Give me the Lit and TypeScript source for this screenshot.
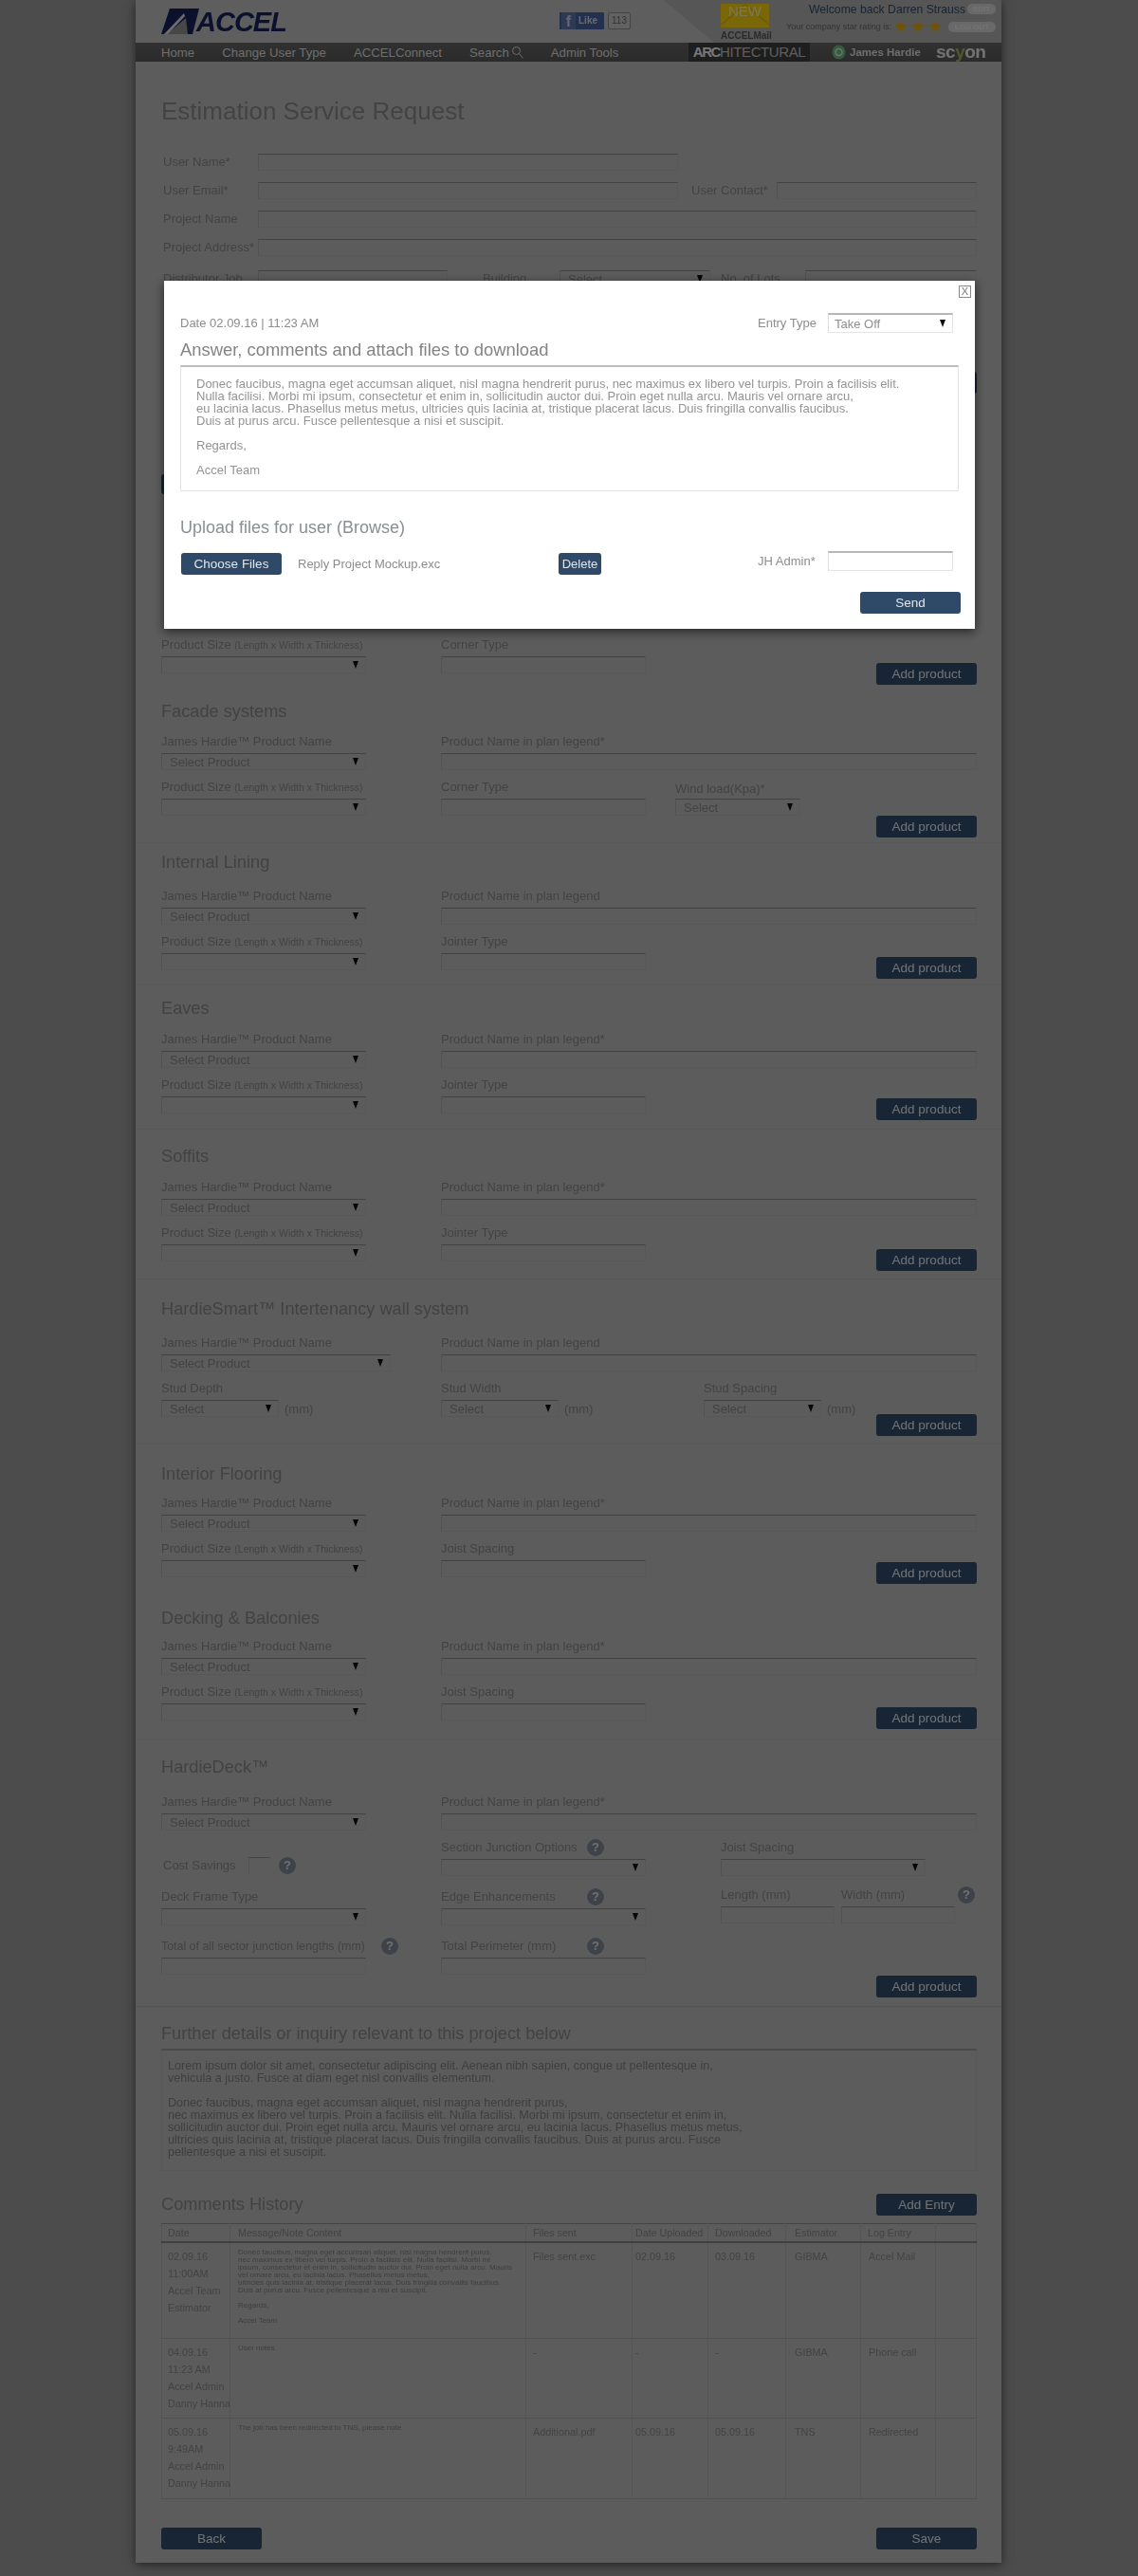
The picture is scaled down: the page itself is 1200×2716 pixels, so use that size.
import { LitElement, html, css, nothing } from "lit";
import { customElement } from "lit/decorators.js";

const LEGEND = "Product Name in plan legend";
interface Sec { title: string; legend: string; type: string; pt: number; hg: number; add: number; pb: number; wind?: boolean; line?: boolean; }
const SECTIONS: Sec[] = [
  { title: "Facade systems", legend: LEGEND + "*", type: "Corner Type", pt: 16, hg: 11, add: 39, pb: 5, wind: true },
  { title: "Internal Lining", legend: LEGEND, type: "Jointer Type", pt: 8, hg: 15, add: 25, pb: 5, line: true },
  { title: "Eaves", legend: LEGEND + "*", type: "Jointer Type", pt: 13, hg: 12, add: 23, pb: 9, line: true },
  { title: "Soffits", legend: LEGEND + "*", type: "Jointer Type", pt: 16, hg: 12, add: 26, pb: 8, line: true },
  { title: "@SMART", legend: LEGEND, type: "", pt: 19, hg: 15, add: 0, pb: 8, line: true },
  { title: "Interior Flooring", legend: LEGEND + "*", type: "Joist Spacing", pt: 19, hg: 10, add: 23, pb: 24, line: true },
  { title: "Decking & Balconies", legend: LEGEND + "*", type: "Joist Spacing", pt: 0, hg: 9, add: 25, pb: 11, line: false },
];

const HISTORY = [
  {
    who: ["02.09.16", "11:00AM", "Accel Team", "Estimator"],
    msg: html`<p class="m">Donec faucibus, magna eget accumsan aliquet, nisl magna hendrerit purus,<br />nec maximus ex libero vel turpis. Proin a facilisis elit. Nulla facilisi. Morbi mi<br />ipsum, consectetur et enim in, sollicitudin auctor dui. Proin eget nulla arcu. Mauris<br />vel ornare arcu, eu lacinia lacus. Phasellus metus metus,<br />ultricies quis lacinia at, tristique placerat lacus. Duis fringilla convallis faucibus.<br />Duis at purus arcu. Fusce pellentesque a nisi et suscipit.</p><p class="m gap">Regards,</p><p class="m gap">Accel Team</p>`,
    file: "Files sent.exc", up: "02.09.16", down: "03.09.16", est: "GIBMA", log: "Accel Mail",
  },
  {
    who: ["04.09.16", "11:23 AM", "Accel Admin", "Danny Hanna"],
    msg: html`<p class="m">User notes</p>`,
    file: "-", up: "-", down: "-", est: "GIBMA", log: "Phone call",
  },
  {
    who: ["05.09.16", "9:49AM", "Accel Admin", "Danny Hanna"],
    msg: html`<p class="m">The job has been redirected to TNS, please note</p>`,
    file: "Additional.pdf", up: "05.09.16", down: "05.09.16", est: "TNS", log: "Redirected",
  },
];

const star = html`<svg class="star" viewBox="0 0 20 20"><path d="M10 1l2.7 6 6.3.6-4.8 4.2 1.5 6.4L10 14.8l-5.7 3.4 1.5-6.4L1 7.600l6.300-.6z" /></svg>`;

@customElement("app-root")
export class AppRoot extends LitElement {
  static styles = css`
    :host { display: block; position: relative; height: 2716px; overflow: hidden; background: #989898;
      font-family: "Liberation Sans", Arial, sans-serif; color: #868686; }
    * { box-sizing: border-box; }
    p { margin: 0; }
    .card { width: 913px; height: 2702px; margin-left: 143px; background: #b8b8b8; box-shadow: 0 2px 10px rgba(0,0,0,.55); filter: blur(.45px); }
    .hdr { position: relative; height: 45px; display: flex; padding-left: 27px; overflow: hidden; background: #bcbcbc; }
    .hdr::before { content: ""; position: absolute; inset: 0; background: #acacac; clip-path: polygon(557px 0, 100% 0, 100% 100%, 610px 100%); }
    .hdr > * { position: relative; }
    .logo { display: flex; align-items: flex-start; width: 420px; padding-top: 8px; }
    .logo svg { width: 40px; height: 29px; flex: none; }
    .logo b { font: italic 700 29px/30px "Liberation Sans", sans-serif; color: #16235a; margin-left: -3px; letter-spacing: -1px; }
    .fb { display: flex; width: 170px; padding-top: 13px; }
    .like { width: 47px; height: 18px; background: #47609c; color: #cfd6e6; font: 700 10px/18px "Liberation Sans", sans-serif; display: flex; border-radius: 1px; }
    .like i { font: 700 16px/20px "Liberation Sans", sans-serif; color: #c7cfe2; width: 15px; margin: 0 3px 0 2px; text-align: center; background: #5c73a9; height: 18px; overflow: hidden; }
    .count { margin-left: 4px; width: 24px; height: 18px; border: 1px solid #888; border-radius: 2px; font-size: 10px; line-height: 16px; text-align: center; color: #666; background: #c4c4c4; }
    .mail { width: 51px; padding-top: 4px; text-align: center; }
    .env { position: relative; display: block; height: 25px; background: #f5cf10; color: #f8ecb0; font: 15px/16px "Liberation Sans", sans-serif; overflow: hidden; }
    .env::after { content: ""; position: absolute; left: 0; right: 0; top: 0; height: 22px; background: linear-gradient(to bottom right, transparent 49%, #d8b408 50%, #d8b408 53%, transparent 54%) left/50% 100% no-repeat, linear-gradient(to bottom left, transparent 49%, #d8b408 50%, #d8b408 53%, transparent 54%) right/50% 100% no-repeat; }
    .env span { position: relative; z-index: 1; display: block; }
    .mail b { display: block; font: 700 10px/14px "Liberation Sans", sans-serif; color: #555; margin-top: 2px; white-space: nowrap; }
    .user { margin-left: 18px; width: 221px; }
    .u1 { display: flex; height: 19px; padding-top: 3px; }
    .welcome { margin-left: 24px; width: 165px; font: 12.2px/15px "Liberation Sans", sans-serif; color: #2f4a68; white-space: nowrap; }
    .pill { background: #d2d2d2; border-radius: 5px; color: #e6e6e6; font: 700 8px/11px "Liberation Sans", sans-serif; text-align: center; }
    .u1 .pill { width: 31px; height: 11px; margin-left: 2px; margin-top: 1px; }
    .u2 { display: flex; align-items: center; height: 18px; margin-top: 0; }
    .rate { font-size: 9px; color: #666; width: 114px; white-space: nowrap; }
    .star { width: 14px; height: 14px; fill: #e2a60c; margin-right: 4px; flex: none; }
    .u2 .pill { width: 50px; height: 11px; margin-left: 3px; }
    .nav { height: 20px; display: flex; align-items: center; padding-left: 27px; gap: 29px; background: linear-gradient(#626262, #565656); position: relative; color: #dcdcdc; font-size: 13.2px; white-space: nowrap; }
    .search { display: flex; align-items: center; gap: 2px; }
    .search svg { width: 13px; height: 14px; }
    .brands { margin-left: auto; display: flex; align-items: center; height: 20px; }
    .arch { width: 128px; height: 20px; background: #3c3c3c; font-size: 15px; line-height: 20px; text-align: center; color: #bdbdbd; letter-spacing: -.4px; font-weight: 400; }
    .arch b { color: #eee; letter-spacing: -1.4px; }
    .jh { display: flex; align-items: center; margin-left: 23px; font: 700 11.5px/20px "Liberation Sans", sans-serif; color: #ddd; width: 110px; }
    .jh svg { width: 15px; height: 16px; margin-right: 4px; }
    .scyon { font: 700 19px/20px "Liberation Sans", sans-serif; color: #e4e4e4; width: 69px; letter-spacing: -.5px; }
    .scyon i { color: #a3b355; font-style: normal; }

    .body { padding: 0 26px 0 27px; }
    h1 { margin: 38px 0 31px; font: 400 26px/28px "Liberation Sans", sans-serif; color: #878787; height: 28px; }
    h2 { margin: 0; font: 400 18.2px/24px "Liberation Sans", sans-serif; color: #858585; height: 24px; }
    .lbl { font-size: 13px; line-height: 18px; white-space: nowrap; display: block; }
    .lbl small { font-size: 10.5px; }
    .frow { display: flex; align-items: center; height: 18px; margin-bottom: 12px; }
    .frow .lbl { width: 102px; padding-left: 2px; flex: none; }
    .fld { display: flex; align-items: center; justify-content: space-between; height: 18px; padding: 0 7px 0 8px; border-style: solid; border-width: 1px; border-color: #848484 #b0b0b0 #b0b0b0 #a4a4a4; font-size: 13px; white-space: nowrap; flex: none; }
    .arrow { width: 0; height: 0; border-style: solid; border-width: 8px 3.500px 0; border-color: #0d0d0d transparent transparent; margin-left: auto; }
    .w216 { width: 216px; } .w242 { width: 242px; } .w132 { width: 132px; } .w124 { width: 124px; } .w121 { width: 121px; }
    .w200 { width: 200px; } .w211 { width: 211px; } .w159 { width: 159px; } .w443 { width: 443px; }
    .grow { flex: 1; }
    .row { display: flex; }
    .row + .row { margin-top: 9px; }
    .col { flex: none; }
    .col.grow { flex: 1; }
    .col .lbl { margin-bottom: 3px; }
    .c1 { width: 295px; }
    .btn { display: block; width: 106px; height: 23px; border-radius: 3px; background: #2f4a68; color: #e0e6ec; font-size: 13.5px; line-height: 23px; text-align: center; border: 0; padding: 0; font-family: inherit; }
    .add { margin-left: auto; margin-top: var(--add); flex: none; }
    .add28 { --add: 28px; } .add36 { --add: 36px; } .add40 { --add: 40px; }
    section.line { border-top: 1px solid #b0b0b0; }
    .hs { padding: var(--pt) 26px var(--pb) 27px; margin: 0 -26px 0 -27px; }
    .hs h2 { margin-bottom: var(--hg); }
    .wind { width: 132px; margin-left: 31px; margin-top: 2px; }
    .wind .lbl { margin-bottom: 1px; }
    .unit { display: flex; align-items: center; }
    .unit span { font-size: 13px; margin-left: 6px; }
    .sc2 { width: 277px; }
    .q { display: inline-block; width: 18px; height: 18px; border-radius: 50%; background: #7d8592; color: #e0e0e0; font: 700 13px/18px "Liberation Sans", sans-serif; text-align: center; flex: none; }
    .qlbl { display: flex; justify-content: space-between; height: 18px; margin-bottom: 3px; }
    .qlbl .lbl { margin: 0; }
    .q172 { width: 172px; } .q250 { width: 250px; }
    .qlbl .tight { font-size: 12.4px; }
    .l127 { width: 127px; }
    .d2 { width: 295px; flex: none; }
    .cost { display: flex; align-items: center; padding: 19px 0 0 2px; height: 37px; }
    .cost .lbl { width: 90px; margin: 0; }
    .cost .fld { width: 23px; padding: 0; margin-right: 9px; border-color: #848484 #b8b8b8 #b8b8b8 #a4a4a4; }
    .lw { display: flex; gap: 7px; }
    .lw .fld { width: 120px; }
    .lw3 { width: 268px; flex: none; margin-top: -2px; }
    .row.dr { margin-top: 13px; }
    .further { border-top: 1px solid #a6a6a6; padding: 16px 26px 0 27px; margin: 0 -26px 0 -27px; }
    .ta { margin-top: 4px; height: 129px; border: 1px solid #b0b0b0; border-top: 2px solid #949494; padding: 10px 6px; font-size: 12.6px; line-height: 13px; color: #7e7e7e; white-space: nowrap; }
    .ta p + p { margin-top: 13px; }
    .chead { display: flex; justify-content: space-between; align-items: center; margin-top: 23px; }
    table { width: 859px; margin-top: 8px; border-collapse: collapse; table-layout: fixed; }
    .c72 { width: 72px; } .c312 { width: 312px; } .c112 { width: 112px; } .c80 { width: 80px; } .c82 { width: 82px; } .c79 { width: 79px; } .c43 { width: 43px; }
    th, td { padding: 0 0 0 7px; text-align: left; font-weight: 400; vertical-align: top; border-left: 1px solid #ababab; border-right: 1px solid #ababab; white-space: nowrap; }
    th:first-child, td:first-child { padding-left: 6px; }
    th { height: 19px; line-height: 18px; border-top: 1px solid #888; border-bottom: 2px solid #808080; font-size: 10.7px; }
    td { padding-top: 5px; line-height: 18px; font-size: 10.8px; border-bottom: 1px solid #a3a3a3; }
    td .m { font-size: 8px; line-height: 8px; color: #7c7c7c; }
    td .gap { margin-top: 8px; }
    td.msg, th.msg { padding-left: 8px; }
    td.msg { padding-top: 6px; }
    .p3 { padding-left: 3px; } .p8 { padding-left: 8px; } .p9 { padding-left: 9px; }
    tr.r1 td { height: 101px; } tr.r2 td { height: 84px; } tr.r3 td { height: 85px; }
    .foot { display: flex; justify-content: space-between; margin-top: 30px; }

    .filler { height: 368px; display: flex; flex-direction: column; }
    .filler .btn { margin: 89px 0 0 auto; }
    .peek { width: 60px; height: 21px; margin-top: 85px; background: #2f4a68; border-radius: 3px; }

    .overlay { position: absolute; inset: 0; background: rgba(0,0,0,.5); }
    .modal { position: absolute; left: 173px; top: 296px; width: 855px; height: 367px; background: #fff; padding: 34px 15px 0 17px; box-shadow: 0 3px 10px rgba(0,0,0,.6); color: #8d8d8d; font-size: 13px; filter: blur(.3px); }
    .close { position: absolute; right: 4px; top: 5px; width: 13px; height: 13px; border: 1px solid #888; background: #fff; color: #777; font: 11px/11px "Liberation Sans", sans-serif; text-align: center; padding: 0; }
    .mtop { display: flex; justify-content: space-between; align-items: center; height: 21px; }
    .et { display: flex; align-items: center; margin-right: 8px; }
    .et .lbl { width: 74px; font-size: 13px; }
    .et .fld { width: 132px; height: 21px; font-size: 13px; border-color: #b7b7b7 #e4e4e4 #e4e4e4 #dcdcdc; border-top-width: 2px; padding-left: 6px; color: #8f8f8f; }
    .modal h3 { margin: 7px 0 5px; font: 400 18.4px/22px "Liberation Sans", sans-serif; color: #848484; height: 22px; }
    .mbox { width: 821px; height: 133px; border: 1px solid #e2e2e2; border-top: 2px solid #bcbcbc; padding: 11px 16px; line-height: 13px; font-size: 13px; color: #949494; white-space: nowrap; }
    .mbox p + p { margin-top: 13px; }
    .modal h3.up { margin: 27px 0 14px; color: #8a8f95; font-size: 18px; }
    .files { display: flex; height: 25px; }
    .files .choose { width: 106px; margin: 2px 0 0 1px; }
    .files .name { width: 275px; margin-left: 17px; line-height: 28px; font-size: 13px; }
    .files .del { width: 45px; margin-top: 2px; font-size: 13px; }
    .files .et { margin-left: auto; align-self: flex-start; }
    .modal .send { margin: 18px 0 0 auto; }
  `;

  private sel(text = "", cls = "w216") {
    return html`<div class="fld ${cls}">${text}<span class="arrow"></span></div>`;
  }
  private inp(cls = "w216") { return html`<div class="fld ${cls}"></div>`; }
  private sizeLabel() { return html`<span class="lbl">Product Size <small>(Length x Width x Thickness)</small></span>`; }

  private std(s: Sec) {
    const vars = `--pt:${s.pt}px;--pb:${s.pb}px;--hg:${s.hg}px;--add:${s.add}px`;
    return html`<section class="hs ${s.line ? "line" : ""}" style=${vars}>
      <h2>${s.title}</h2>
      <div class="row">
        <div class="col c1"><span class="lbl">James Hardie™ Product Name</span>${this.sel("Select Product")}</div>
        <div class="col grow"><span class="lbl">${s.legend}</span>${this.inp("")}</div>
      </div>
      <div class="row">
        <div class="col c1">${this.sizeLabel()}${this.sel()}</div>
        <div class="col w216"><span class="lbl">${s.type}</span>${this.inp()}</div>
        ${s.wind ? html`<div class="col wind"><span class="lbl">Wind load(Kpa)*</span>${this.sel("Select", "w132")}</div>` : nothing}
        <button class="btn add">Add product</button>
      </div>
    </section>`;
  }

  private smart(s: Sec) {
    const vars = `--pt:${s.pt}px;--pb:${s.pb}px;--hg:${s.hg}px`;
    const stud = (l: string, w: string) => html`<div class="col ${w}"><span class="lbl">${l}</span><div class="unit">${this.sel("Select", "w124")}<span>(mm)</span></div></div>`;
    return html`<section class="hs line" style=${vars}>
      <h2>HardieSmart™ Intertenancy wall system</h2>
      <div class="row">
        <div class="col c1"><span class="lbl">James Hardie™ Product Name</span>${this.sel("Select Product", "w242")}</div>
        <div class="col grow"><span class="lbl">${s.legend}</span>${this.inp("")}</div>
      </div>
      <div class="row">
        ${stud("Stud Depth", "c1")}${stud("Stud Width", "sc2")}${stud("Stud Spacing", "")}
        <button class="btn add add36">Add product</button>
      </div>
    </section>`;
  }

  private deck() {
    const q = html`<span class="q">?</span>`;
    return html`<section class="hs deck line" style="--pt:16px;--pb:9px;--hg:16px">
      <h2>HardieDeck™</h2>
      <div class="row">
        <div class="col c1"><span class="lbl">James Hardie™ Product Name</span>${this.sel("Select Product")}</div>
        <div class="col grow"><span class="lbl">${LEGEND}*</span>${this.inp("")}</div>
      </div>
      <div class="row">
        <div class="col c1"><div class="cost"><span class="lbl">Cost Savings</span>${this.inp("")}${q}</div></div>
        <div class="col d2"><div class="qlbl q172"><span class="lbl">Section Junction Options</span>${q}</div>${this.sel()}</div>
        <div class="col w216"><span class="lbl">Joist Spacing</span>${this.sel()}</div>
      </div>
      <div class="row dr">
        <div class="col c1"><span class="lbl">Deck Frame Type</span>${this.sel()}</div>
        <div class="col d2"><div class="qlbl q172"><span class="lbl">Edge Enhancements</span>${q}</div>${this.sel()}</div>
        <div class="col lw3"><div class="qlbl"><span class="lbl l127">Length (mm)</span><span class="lbl">Width (mm)</span><span class="grow"></span>${q}</div>
          <div class="lw">${this.inp("")}${this.inp("")}</div></div>
      </div>
      <div class="row dr">
        <div class="col c1"><div class="qlbl q250"><span class="lbl tight">Total of all sector junction lengths (mm)</span>${q}</div>${this.inp()}</div>
        <div class="col d2"><div class="qlbl q172"><span class="lbl">Total Perimeter (mm)</span>${q}</div>${this.inp()}</div>
        <button class="btn add add40">Add product</button>
      </div>
    </section>`;
  }

  render() {
    return html`
      <div class="card">
        <header class="hdr">
          <div class="logo">
            <svg viewBox="0 0 40 29"><path d="M0 28L9 1h31l-7 27z" fill="#16235a" /><path d="M6 28L26 11l2 17z" fill="#8f8f8f" /><path d="M3 28L24 6l1 3L7 28z" fill="#d8d8d8" /></svg>
            <b>ACCEL</b>
          </div>
          <div class="fb"><div class="like"><i>f</i>Like</div><div class="count">113</div></div>
          <div class="mail"><span class="env"><span>NEW</span></span><b>ACCELMail</b></div>
          <div class="user">
            <div class="u1"><span class="welcome">Welcome back Darren Strauss</span><span class="pill">EDIT</span></div>
            <div class="u2"><span class="rate">Your company star rating is:</span>${star}${star}${star}<span class="pill">LOG OUT</span></div>
          </div>
        </header>
        <nav class="nav">
          <span>Home</span><span>Change User Type</span><span>ACCELConnect</span>
          <span class="search">Search<svg viewBox="0 0 13 14"><circle cx="5.500" cy="5.500" r="4" fill="none" stroke="#dcdcdc" /><path d="M8.500 8.500l4 5" stroke="#dcdcdc" fill="none" /></svg></span>
          <span>Admin Tools</span>
          <div class="brands">
            <div class="arch"><b>ARC</b>HITECTURAL</div>
            <div class="jh"><svg viewBox="0 0 15 16"><ellipse cx="7.500" cy="8" rx="7" ry="7.500" fill="#6db57f" /><circle cx="7.500" cy="8" r="3.500" fill="none" stroke="#d5ecd9" stroke-width="1.500" /></svg>James Hardie</div>
            <div class="scyon">sc<i>y</i>on</div>
          </div>
        </nav>
        <div class="body">
          <h1>Estimation Service Request</h1>
          <div class="frow"><span class="lbl">User Name*</span>${this.inp("w443")}</div>
          <div class="frow"><span class="lbl">User Email*</span>${this.inp("w443")}<span class="lbl" style="width:104px;padding-left:14px">User Contact*</span>${this.inp("w211")}</div>
          <div class="frow"><span class="lbl">Project Name</span><div class="fld grow"></div></div>
          <div class="frow" style="margin-bottom:15px"><span class="lbl">Project Address*</span><div class="fld grow"></div></div>
          <div class="frow" style="margin:0"><span class="lbl">Distributor Job</span>${this.inp("w200")}<span class="lbl" style="width:118px;padding-left:37px">Building</span>${this.sel("Select", "w159")}<span class="lbl" style="width:100px;padding-left:11px">No. of Lots</span><div class="fld grow"></div></div>
          <div class="filler"><button class="btn">Add product</button><div class="peek"></div></div>
          <div class="row">
            <div class="col c1">${this.sizeLabel()}${this.sel()}</div>
            <div class="col w216"><span class="lbl">Corner Type</span>${this.inp()}</div>
            <button class="btn add add28">Add product</button>
          </div>
          ${SECTIONS.map((s) => (s.title === "@SMART" ? this.smart(s) : this.std(s)))}
          ${this.deck()}
          <div class="further">
            <h2>Further details or inquiry relevant to this project below</h2>
            <div class="ta">
              <p>Lorem ipsum dolor sit amet, consectetur adipiscing elit. Aenean nibh sapien, congue ut pellentesque in,<br />vehicula a justo. Fusce at diam eget nisl convallis elementum.</p>
              <p>Donec faucibus, magna eget accumsan aliquet, nisl magna hendrerit purus,<br />nec maximus ex libero vel turpis. Proin a facilisis elit. Nulla facilisi. Morbi mi ipsum, consectetur et enim in,<br />sollicitudin auctor dui. Proin eget nulla arcu. Mauris vel ornare arcu, eu lacinia lacus. Phasellus metus metus,<br />ultricies quis lacinia at, tristique placerat lacus. Duis fringilla convallis faucibus. Duis at purus arcu. Fusce<br />pellentesque a nisi et suscipit.</p>
            </div>
          </div>
          <div class="chead"><h2>Comments History</h2><button class="btn">Add Entry</button></div>
          <table>
            <colgroup><col class="c72" /><col class="c312" /><col class="c112" /><col class="c80" /><col class="c82" /><col class="c79" /><col class="c79" /><col class="c43" /></colgroup>
            <thead><tr><th>Date</th><th class="msg">Message/Note Content</th><th>Files sent</th><th class="p3">Date Uploaded</th><th>Downloaded</th><th class="p9">Estimator</th><th>Log Entry</th><th></th></tr></thead>
            <tbody>
              ${HISTORY.map((r, i) => html`<tr class="r${i + 1}">
                <td>${r.who.map((w) => html`<div>${w}</div>`)}</td>
                <td class="msg">${r.msg}</td>
                <td>${r.file}</td><td class="p3">${r.up}</td><td>${r.down}</td><td class="p9">${r.est}</td><td class="p8">${r.log}</td><td></td>
              </tr>`)}
            </tbody>
          </table>
          <div class="foot"><button class="btn">Back</button><button class="btn">Save</button></div>
        </div>
      </div>
      <div class="overlay"></div>
      <div class="modal">
        <button class="close">X</button>
        <div class="mtop"><span>Date 02.09.16 | 11:23 AM</span><div class="et"><span class="lbl">Entry Type</span><div class="fld">Take Off<span class="arrow"></span></div></div></div>
        <h3>Answer, comments and attach files to download</h3>
        <div class="mbox">
          <p>Donec faucibus, magna eget accumsan aliquet, nisl magna hendrerit purus, nec maximus ex libero vel turpis. Proin a facilisis elit.<br />Nulla facilisi. Morbi mi ipsum, consectetur et enim in, sollicitudin auctor dui. Proin eget nulla arcu. Mauris vel ornare arcu,<br />eu lacinia lacus. Phasellus metus metus, ultricies quis lacinia at, tristique placerat lacus. Duis fringilla convallis faucibus.<br />Duis at purus arcu. Fusce pellentesque a nisi et suscipit.</p>
          <p>Regards,</p><p>Accel Team</p>
        </div>
        <h3 class="up">Upload files for user (Browse)</h3>
        <div class="files">
          <button class="btn choose">Choose Files</button>
          <span class="name">Reply Project Mockup.exc</span>
          <button class="btn del">Delete</button>
          <div class="et"><span class="lbl">JH Admin*</span><div class="fld"></div></div>
        </div>
        <button class="btn send">Send</button>
      </div>
    `;
  }
}
